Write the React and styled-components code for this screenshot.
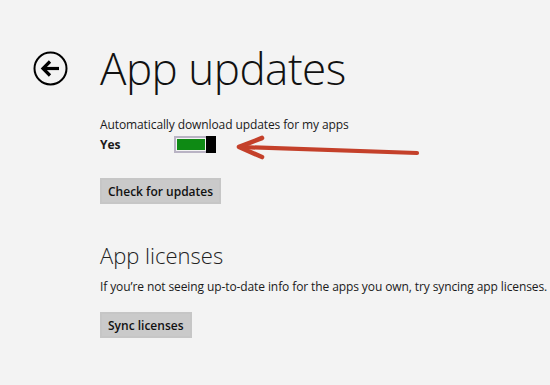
import React from "react";
import styled, { createGlobalStyle } from "styled-components";

const GlobalStyle = createGlobalStyle`
  html, body {
    margin: 0;
    padding: 0;
    background: #f3f3f3;
  }
  body {
    font-family: "Open Sans", "Liberation Sans", sans-serif;
    color: #1a1a1a;
  }
`;

const Page = styled.div`
  display: flex;
  width: 550px;
  height: 385px;
  overflow: hidden;
  box-sizing: border-box;
  padding-top: 42px;
`;

const BackColumn = styled.div`
  flex: 0 0 100px;
  display: flex;
  align-items: flex-start;
  padding-left: 33px;
  padding-top: 9px;
  box-sizing: border-box;
`;

const BackButton = styled.button`
  width: 35px;
  height: 35px;
  padding: 0;
  border: none;
  background: none;
  cursor: pointer;
`;

const Content = styled.div`
  flex: 1;
  min-width: 0;
  display: flex;
  flex-direction: column;
  align-items: flex-start;
`;

const Title = styled.h1`
  margin: 0;
  font-weight: 300;
  font-size: 44px;
  line-height: 52px;
  letter-spacing: -0.5px;
  color: #111;
`;

const SectionTitle = styled.h2`
  margin: ${(p) => p.$top || 0}px 0 0;
  font-weight: 300;
  font-size: 22px;
  line-height: 30px;
  color: #222;
`;

const Label = styled.div`
  margin-top: ${(p) => p.$top || 0}px;
  font-size: 12px;
  line-height: 18px;
  letter-spacing: -0.1px;
  color: #1a1a1a;
  white-space: nowrap;
`;

const ToggleRow = styled.div`
  position: relative;
  display: flex;
  align-items: center;
  height: 20px;
`;

const Value = styled.span`
  width: 74px;
  font-weight: 700;
  font-size: 12px;
`;

const Toggle = styled.div`
  width: 42px;
  height: 17px;
  box-sizing: border-box;
  border: 2px solid #b9b3c4;
  display: flex;
  background: #f3f3f3;
`;

const Track = styled.div`
  flex: 1;
  margin: 1px;
  background: #0e8a14;
`;

const Thumb = styled.div`
  width: 10px;
  background: #000;
  margin: -2px -2px -2px 0;
`;

const Arrow = styled.svg`
  position: absolute;
  left: 130px;
  top: -2px;
`;

const Button = styled.button`
  margin-top: ${(p) => p.$top || 0}px;
  height: 26px;
  padding: 0 6px;
  border: 2px solid #c6c6c6;
  background: #cacaca;
  font-family: "Open Sans", "Liberation Sans", sans-serif;
  font-weight: 600;
  font-size: 12px;
  color: #111;
`;

function BackIcon() {
  return (
    <svg width="35" height="35" viewBox="0 0 35 35">
      <circle cx="17.5" cy="17.5" r="16" fill="none" stroke="#000" strokeWidth="2" />
      <path d="M10 17.5 H26" stroke="#000" strokeWidth="3.2" fill="none" />
      <path d="M17 10.5 L10 17.5 L17 24.5" stroke="#000" strokeWidth="3.2" fill="none" />
    </svg>
  );
}

export default function App() {
  return (
    <>
      <GlobalStyle />
      <Page>
        <BackColumn>
          <BackButton aria-label="Back">
            <BackIcon />
          </BackButton>
        </BackColumn>
        <Content>
          <Title>App updates</Title>
          <Label $top={22}>Automatically download updates for my apps</Label>
          <ToggleRow>
            <Value>Yes</Value>
            <Toggle>
              <Track />
              <Thumb />
            </Toggle>
            <Arrow width="195" height="32" viewBox="0 0 195 32">
              <path
                d="M10 15 L187 21"
                stroke="#c4402a"
                strokeWidth="4.2"
                strokeLinecap="round"
                fill="none"
              />
              <path
                d="M32 6 L9 15 L32 25"
                stroke="#c4402a"
                strokeWidth="4.6"
                strokeLinecap="round"
                strokeLinejoin="round"
                fill="none"
              />
            </Arrow>
          </ToggleRow>
          <Button $top={24}>Check for updates</Button>
          <SectionTitle $top={36}>App licenses</SectionTitle>
          <Label $top={8}>
            If you’re not seeing up-to-date info for the apps you own, try syncing app licenses.
          </Label>
          <Button $top={16}>Sync licenses</Button>
        </Content>
      </Page>
    </>
  );
}
